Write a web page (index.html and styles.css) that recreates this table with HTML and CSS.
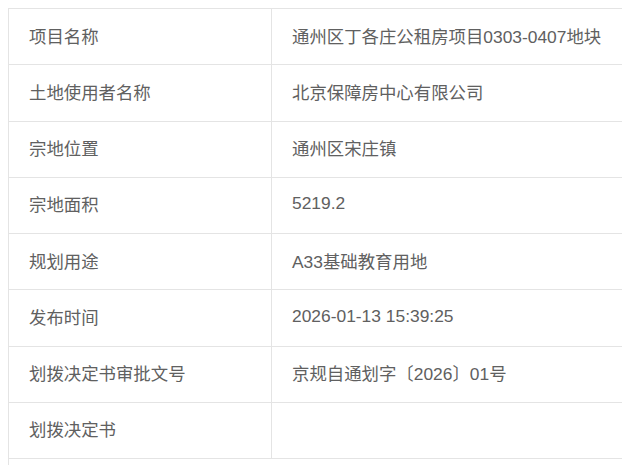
FILE: index.html
```html
<!DOCTYPE html>
<html lang="zh-CN">
<head>
<meta charset="utf-8">
<title>地块信息</title>
<link rel="stylesheet" href="styles.css">
</head>
<body>
<div class="info-table">
  <div class="cell label">项目名称</div>
  <div class="cell value">通州区丁各庄公租房项目0303-0407地块</div>
  <div class="cell label">土地使用者名称</div>
  <div class="cell value">北京保障房中心有限公司</div>
  <div class="cell label">宗地位置</div>
  <div class="cell value">通州区宋庄镇</div>
  <div class="cell label">宗地面积</div>
  <div class="cell value">5219.2</div>
  <div class="cell label">规划用途</div>
  <div class="cell value">A33基础教育用地</div>
  <div class="cell label">发布时间</div>
  <div class="cell value">2026-01-13 15:39:25</div>
  <div class="cell label">划拨决定书审批文号</div>
  <div class="cell value">京规自通划字〔2026〕01号</div>
  <div class="cell label">划拨决定书</div>
  <div class="cell value"></div>
  <div class="cell full"></div>
</div>
</body>
</html>
```

FILE: styles.css
```css
html {
  overflow: hidden;
}
body {
  margin: 8px;
  background: #ffffff;
  font-family: "Liberation Sans", "Noto Sans CJK SC", sans-serif;
  font-size: 17.4px;
  color: #606060;
}
.info-table {
  width: 640px;
  display: grid;
  grid-template-columns: 263px 1fr;
  grid-auto-rows: 56.25px;
  border-top: 1px solid #e4e4e4;
  border-left: 1px solid #e4e4e4;
}
.cell {
  box-sizing: border-box;
  display: flex;
  align-items: center;
  padding: 0 20px 3px;
  border-right: 1px solid #e4e4e4;
  border-bottom: 1px solid #e4e4e4;
  white-space: nowrap;
}
.full {
  grid-column: 1 / span 2;
}
```
